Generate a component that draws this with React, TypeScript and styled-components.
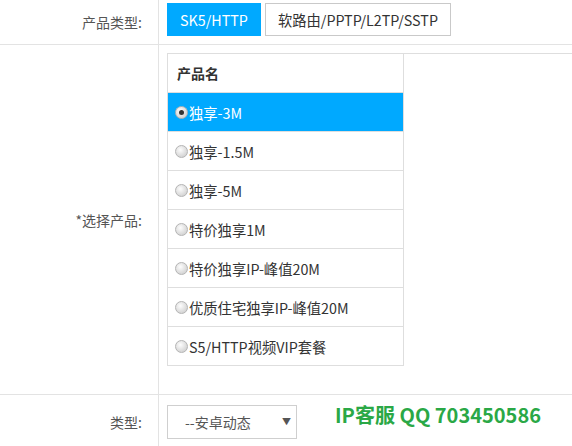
import styled, { createGlobalStyle } from "styled-components";

const GlobalStyle = createGlobalStyle`
  body {
    margin: 0;
    background: #fff;
    font-family: "Microsoft YaHei", "Noto Sans CJK SC", "Noto Sans", sans-serif;
    font-size: 14px;
    color: #333;
  }
`;

const FormTable = styled.div`
  display: grid;
  grid-template-columns: 159px 1fr;
  width: 572px;
  height: 446px;
  overflow: hidden;
`;

const Label = styled.div<{ $top?: number }>`
  border-right: 1px solid #e3e3e3;
  border-bottom: 1px solid #e3e3e3;
  display: flex;
  align-items: ${(p) => (p.$top !== undefined ? "flex-start" : "center")};
  justify-content: flex-end;
  padding-right: 16px;
  padding-top: ${(p) => p.$top ?? 0}px;
  color: #555;
  font-size: 14px;
`;

const Cell = styled.div<{ $pad: string }>`
  border-bottom: 1px solid #e3e3e3;
  padding: ${(p) => p.$pad};
  min-width: 0;
`;

const TypeButtons = styled.div`
  display: flex;
  gap: 4px;
`;

const TypeButton = styled.button<{ $active?: boolean }>`
  height: 33px;
  padding: 0 12px;
  font-family: inherit;
  font-size: 14.3px;
  border: 1px solid ${(p) => (p.$active ? "#00a9ff" : "#c9c9c9")};
  background: ${(p) => (p.$active ? "#00a9ff" : "#fff")};
  color: ${(p) => (p.$active ? "#fff" : "#333")};
  cursor: pointer;
`;

const ProductWrap = styled.div`
  border-top: 1px solid #dedede;
`;

const ProductList = styled.div`
  width: 235px;
  border: 1px solid #dedede;
  border-top: none;
`;

const HeadRow = styled.div`
  height: 38px;
  display: flex;
  align-items: center;
  padding-left: 9px;
  font-weight: bold;
  color: #333;
`;

const ItemRow = styled.label<{ $selected?: boolean }>`
  height: 38px;
  border-top: 1px solid #dedede;
  display: flex;
  align-items: center;
  padding-left: 7px;
  font-size: 14.3px;
  background: ${(p) => (p.$selected ? "#00a9ff" : "#fff")};
  color: ${(p) => (p.$selected ? "#fff" : "#333")};
  cursor: pointer;
`;

const Radio = styled.span<{ $checked?: boolean }>`
  width: 11px;
  height: 11px;
  border-radius: 50%;
  border: 1px solid #b4b4b4;
  background: radial-gradient(circle at 40% 35%, #fdfdfd 0%, #dcdcdc 60%, #c8c8c8 100%);
  display: inline-flex;
  align-items: center;
  justify-content: center;
  margin-right: 1px;
  flex-shrink: 0;

  &::after {
    content: "";
    width: 5px;
    height: 5px;
    border-radius: 50%;
    background: #333;
    display: ${(p) => (p.$checked ? "block" : "none")};
  }
`;

const BottomLine = styled.div`
  display: flex;
  align-items: flex-start;
  gap: 38px;
`;

const SelectBox = styled.div`
  box-sizing: border-box;
  width: 130px;
  height: 34px;
  border: 1px solid #cfcfcf;
  display: flex;
  align-items: center;
  justify-content: space-between;
  padding: 0 5px 0 17px;
  color: #555;
  font-size: 14px;
`;

const Arrow = styled.span`
  font-size: 9px;
  color: #555;
  margin-top: -2px;
`;

const Service = styled.div`
  color: #2aa846;
  font-size: 20px;
  font-weight: bold;
  line-height: 22px;
  margin-top: -1px;
  white-space: nowrap;
`;

const products = [
  "独享-3M",
  "独享-1.5M",
  "独享-5M",
  "特价独享1M",
  "特价独享IP-峰值20M",
  "优质住宅独享IP-峰值20M",
  "S5/HTTP视频VIP套餐",
];

export default function App() {
  return (
    <>
      <GlobalStyle />
      <FormTable>
        <Label>产品类型:</Label>
        <Cell $pad="3px 0 8px 8px">
          <TypeButtons>
            <TypeButton $active>SK5/HTTP</TypeButton>
            <TypeButton>软路由/PPTP/L2TP/SSTP</TypeButton>
          </TypeButtons>
        </Cell>

        <Label>*选择产品:</Label>
        <Cell $pad="8px 0 28px 8px">
          <ProductWrap>
            <ProductList>
              <HeadRow>产品名</HeadRow>
              {products.map((name, i) => (
                <ItemRow key={name} $selected={i === 0}>
                  <Radio $checked={i === 0} />
                  {name}
                </ItemRow>
              ))}
            </ProductList>
          </ProductWrap>
        </Cell>

        <Label $top={10}>
          <span style={{ lineHeight: "34px" }}>类型:</span>
        </Label>
        <Cell $pad="10px 0 10px 8px">
          <BottomLine>
            <SelectBox>
              --安卓动态
              <Arrow>▼</Arrow>
            </SelectBox>
            <Service>IP客服 QQ 703450586</Service>
          </BottomLine>
        </Cell>
      </FormTable>
    </>
  );
}
